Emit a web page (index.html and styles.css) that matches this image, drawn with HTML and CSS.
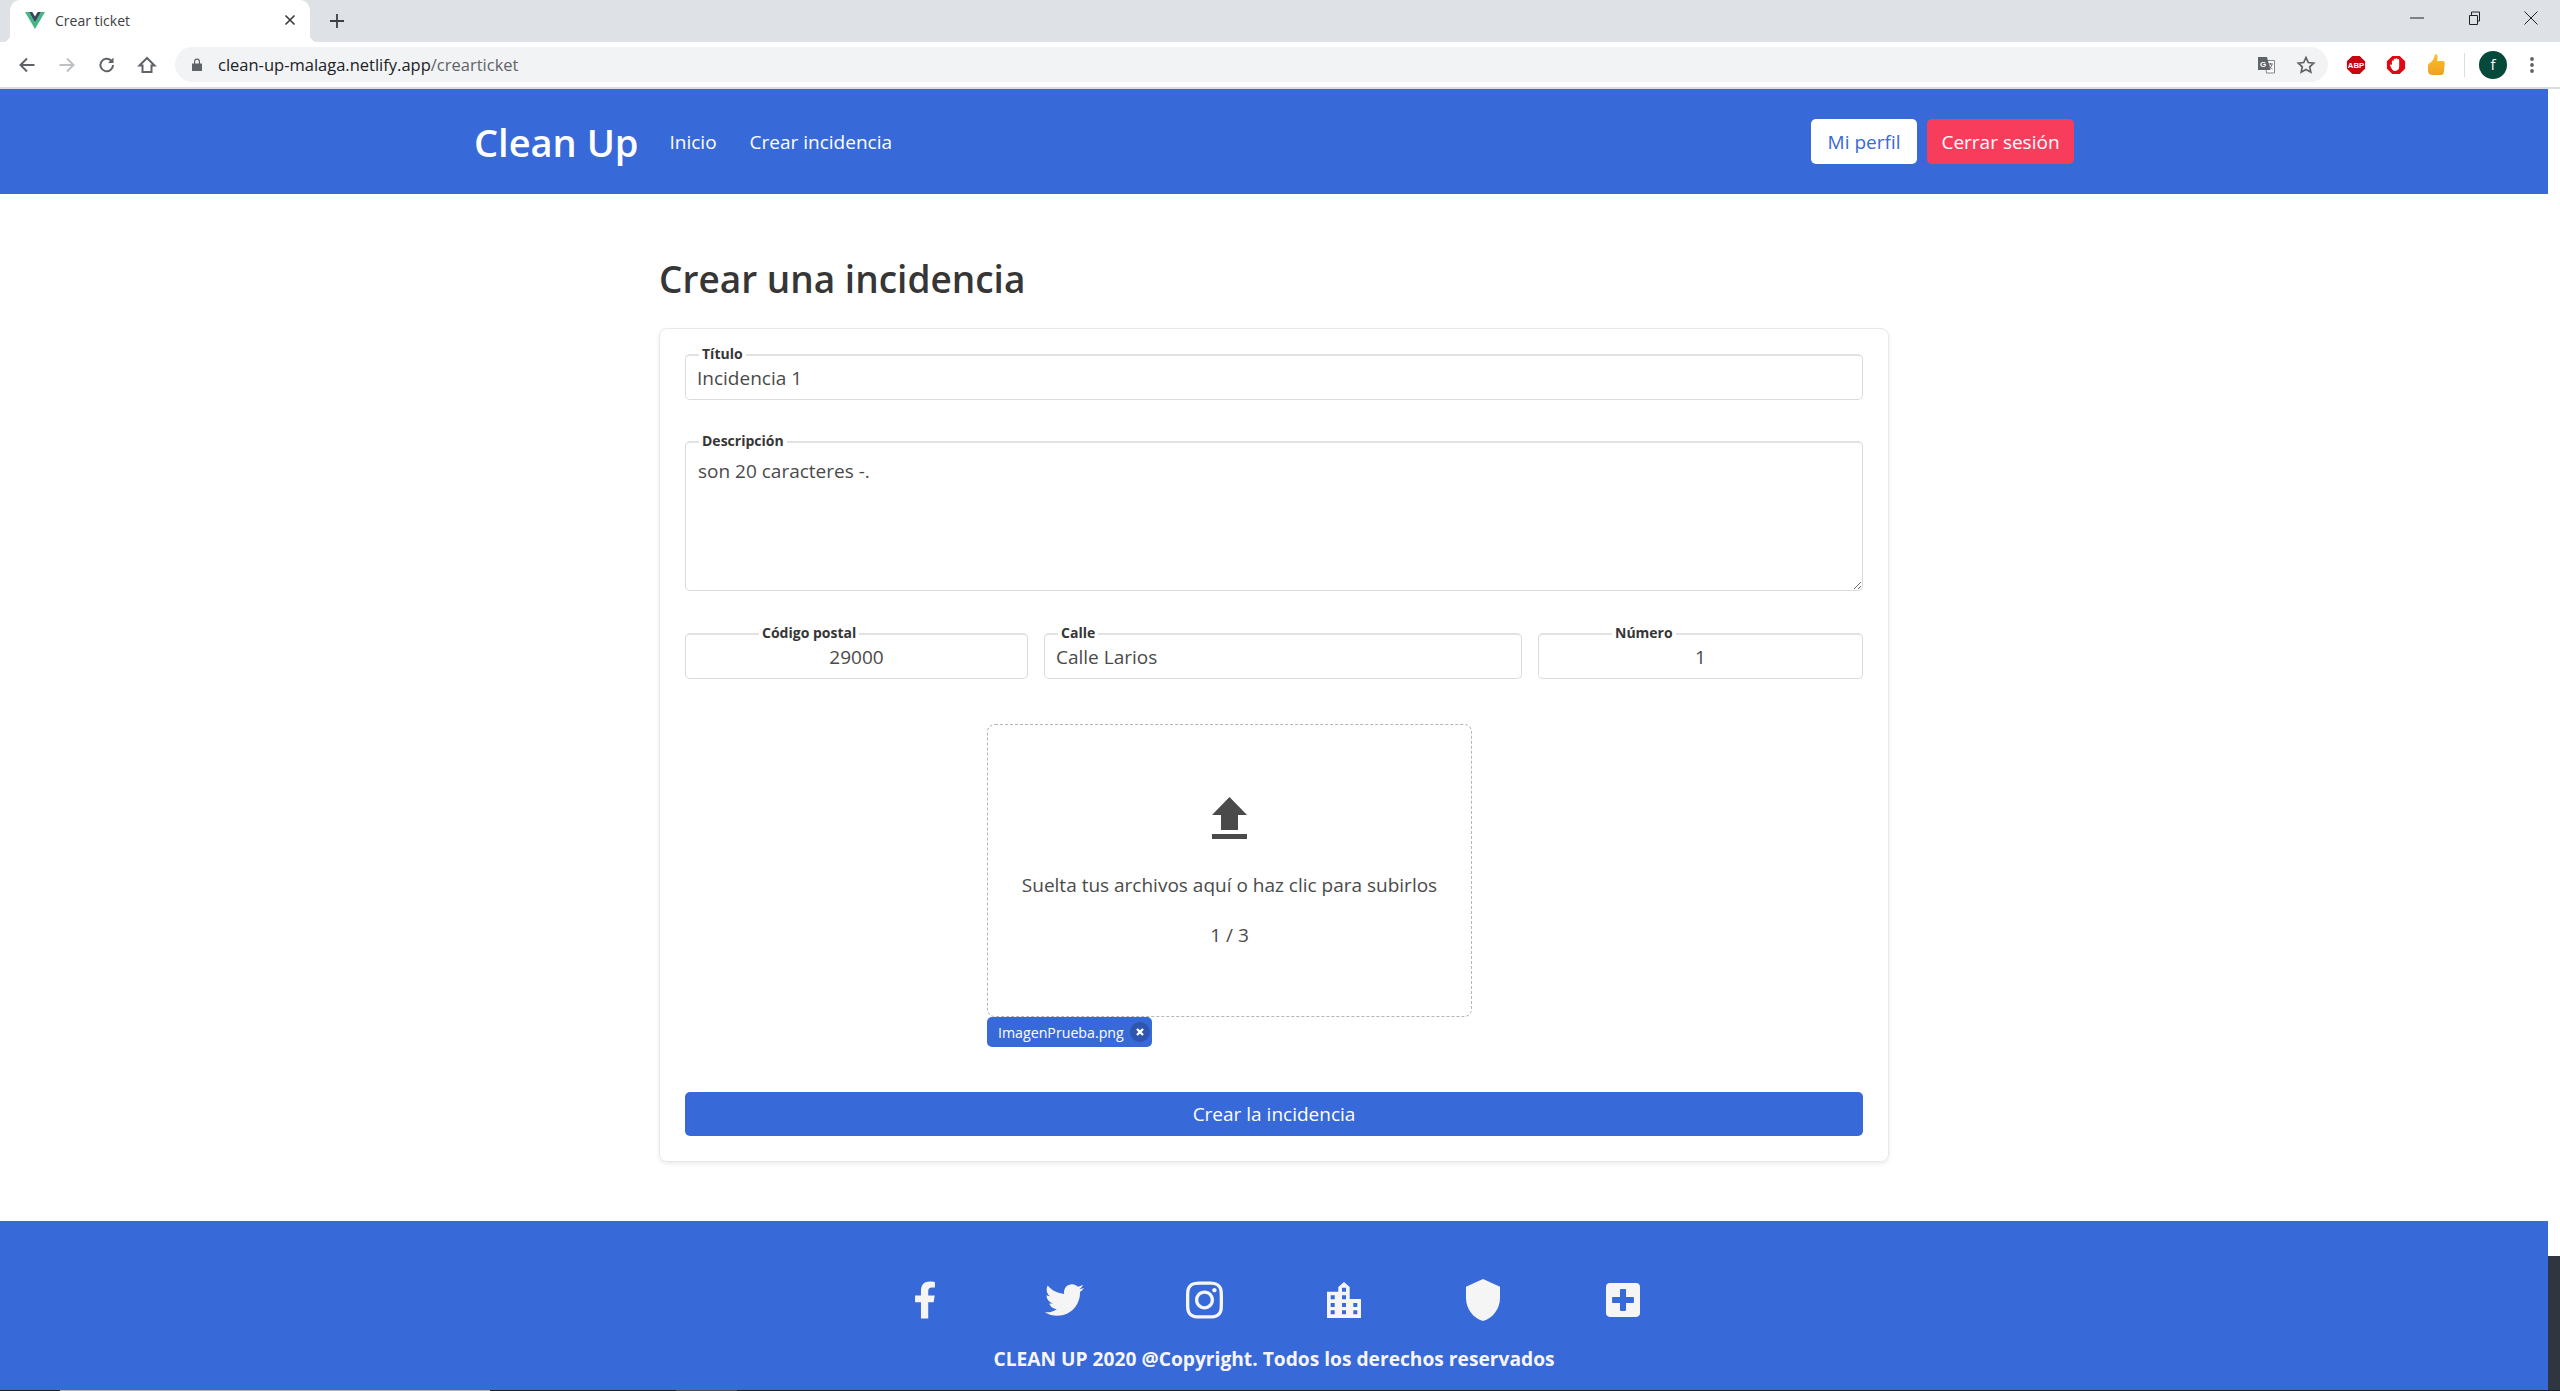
FILE: index.html
```html
<!DOCTYPE html>
<html lang="es">
<head>
<meta charset="utf-8">
<title>Crear ticket</title>
<link rel="stylesheet" href="styles.css">
</head>
<body>

<!-- browser chrome -->
<div class="tabstrip">
  <div class="tab">
    <svg class="favicon" viewBox="0 0 20 17"><path fill="#41b883" d="M0 0h4l6 10.500L16 0h4L10 17z"/><path fill="#35495e" d="M4 0h3.300L10 4.500 12.700 0H16l-6 10.500z"/></svg>
    <span class="tab-title">Crear ticket</span>
    <svg class="tab-close" viewBox="0 0 12 12"><path d="M1.500 1.500l9 9M10.500 1.500l-9 9" stroke="#3c4043" stroke-width="1.700" fill="none"/></svg>
  </div>
  <svg class="tab-new" viewBox="0 0 16 16"><path d="M8 1v14M1 8h14" stroke="#3c4043" stroke-width="1.800" fill="none"/></svg>
  <div class="win-controls">
    <svg viewBox="0 0 14 14"><path d="M0 7h14" stroke="#222" fill="none"/></svg>
    <svg viewBox="0 0 14 14"><path d="M2.500 4.500h8v9h-8zM4.500 4.500v-3.500h8v9h-2" stroke="#222" fill="none"/></svg>
    <svg viewBox="0 0 14 14"><path d="M0.500 0.500l13 13M13.500 0.500l-13 13" stroke="#222" fill="none"/></svg>
  </div>
</div>

<div class="toolbar">
  <div class="tool"><svg viewBox="0 0 20 20"><path d="M17.500 10H4M10 3.500L3.500 10l6.500 6.500" stroke="#5f6368" stroke-width="2" fill="none"/></svg></div>
  <div class="tool"><svg viewBox="0 0 20 20"><path d="M2.500 10H16M10 3.500l6.500 6.500-6.500 6.500" stroke="#bdc1c6" stroke-width="2" fill="none"/></svg></div>
  <div class="tool"><svg viewBox="0 0 20 20"><path d="M16 10a6.300 6.300 0 1 1-1.900-4.500" stroke="#5f6368" stroke-width="2" fill="none"/><path d="M16.500 2.500v5.500H11z" fill="#5f6368"/></svg></div>
  <div class="tool"><svg viewBox="0 0 20 20"><path d="M10 3L2.500 10.500h3V17h9v-6.500h3z" stroke="#5f6368" stroke-width="2" fill="none"/></svg></div>
  <div class="omnibox">
    <svg class="lock" viewBox="0 0 10 13"><path fill="#5f6368" d="M0 5.500h10V13H0zM2 5.500V3.500a3 3 0 0 1 6 0v2H6.800V3.500a1.800 1.800 0 0 0-3.600 0v2z"/></svg>
    <span class="url">clean-up-malaga.netlify.app<span class="url-path">/crearticket</span></span>
    <div class="tool omni-end"><svg viewBox="0 0 20 20"><path fill="#fff" stroke="#80868b" d="M9 5.500h9.500v12.500H10.500z"/><path fill="#5f6368" d="M2 2h9l3.500 13H2z"/><text x="4" y="11.500" class="tr-g">G</text><path d="M12 9h5M14.500 8v1.500M16 9.500c-.5 2-2 3.500-3.500 4.500M13 10.500c.5 1.500 2 3 3.500 3.500" stroke="#5f6368" fill="none"/></svg></div>
    <div class="tool"><svg viewBox="0 0 20 20"><path d="M10 2.500l2.300 5 5.400.6-4 3.700 1.100 5.400L10 14.500l-4.800 2.700 1.100-5.400-4-3.700 5.400-.6z" stroke="#5f6368" stroke-width="1.700" fill="none"/></svg></div>
  </div>
  <div class="tool ext-first"><svg viewBox="0 0 22 22"><path fill="#c8040e" d="M7 1h8l6 6v8l-6 6H7l-6-6V7z"/><text x="11" y="14.500" class="abp">ABP</text></svg></div>
  <div class="tool"><svg viewBox="0 0 22 22"><path fill="#e30613" d="M7 1h8l6 6v8l-6 6H7l-6-6V7z"/><path fill="#fff" d="M6.500 11V7a1 1 0 0 1 2 0V5a1 1 0 0 1 2 0V4.500a1 1 0 0 1 2 0V5.500a1 1 0 0 1 2 0V13a4.500 4.500 0 0 1-4.500 4.500c-2 0-3-1-4-3L4.500 11.500c-.500-1 1.300-1.800 2-.500z"/></svg></div>
  <div class="tool"><svg class="thumb-up" viewBox="0 0 17 21"><defs><linearGradient id="gold" x1="0" y1="0" x2="0" y2="1"><stop offset="0" stop-color="#fbc02d"/><stop offset="1" stop-color="#f0a020"/></linearGradient></defs><path fill="url(#gold)" d="M7 .500c1.500-.800 2.800.300 2.600 2L9.200 7H14.500c1.800 0 2.500 1.200 2.300 2.500l-1 9c-.2 1.500-1 2.500-2.800 2.500H5C2 21 0 19.500 0 17v-5c0-1.500 1-2.500 2.500-3.500C5 7 6.500 3 7 .500z"/></svg></div>
  <div class="tool-sep"></div>
  <div class="avatar">f</div>
  <div class="tool"><svg viewBox="0 0 20 20"><circle cx="10" cy="4" r="1.900" fill="#5f6368"/><circle cx="10" cy="10" r="1.900" fill="#5f6368"/><circle cx="10" cy="16" r="1.900" fill="#5f6368"/></svg></div>
</div>

<div class="viewport">
  <div class="page">

    <nav class="navbar">
      <a class="brand">Clean Up</a>
      <a class="nav-link">Inicio</a>
      <a class="nav-link">Crear incidencia</a>
      <div class="nav-end">
        <a class="btn btn-white">Mi perfil</a>
        <a class="btn btn-danger">Cerrar sesión</a>
      </div>
    </nav>

    <main class="content">
      <h1 class="title">Crear una incidencia</h1>
      <form class="card">
        <fieldset class="field">
          <legend>Título</legend>
          <input class="control" type="text" value="Incidencia 1">
        </fieldset>
        <fieldset class="field field-area">
          <legend>Descripción</legend>
          <textarea class="control">son 20 caracteres -.</textarea>
        </fieldset>
        <div class="address">
          <fieldset class="field">
            <legend class="legend-mid">Código postal</legend>
            <input class="control centered" type="text" value="29000">
          </fieldset>
          <fieldset class="field">
            <legend>Calle</legend>
            <input class="control" type="text" value="Calle Larios">
          </fieldset>
          <fieldset class="field">
            <legend class="legend-mid">Número</legend>
            <input class="control centered" type="text" value="1">
          </fieldset>
        </div>
        <div class="upload">
          <div class="dropzone">
            <svg class="upload-icon" viewBox="0 0 35 42"><path fill="#4a4a4a" d="M17.500 0L35 18H26V33H9V18H0zM0 37H35V42H0z"/></svg>
            <p class="drop-text">Suelta tus archivos aquí o haz clic para subirlos</p>
            <p class="drop-count">1 / 3</p>
          </div>
          <div class="chip">
            <span>ImagenPrueba.png</span>
            <span class="chip-del"><svg viewBox="0 0 10 10"><path d="M2 2l6 6M8 2l-6 6" stroke="#fff" stroke-width="2.400" fill="none"/></svg></span>
          </div>
        </div>
        <button class="submit" type="button">Crear la incidencia</button>
      </form>
    </main>

    <footer class="footer">
      <div class="socials">
        <a class="social"><svg class="ic-fb" viewBox="22 0 276 512"><path d="M279.14 288l14.22-92.66h-88.91v-60.13c0-25.35 12.42-50.06 52.24-50.06h40.42V6.26S260.43 0 225.36 0c-73.22 0-121.08 44.38-121.08 124.72v70.62H22.89V288h81.39v224h100.17V288z"/></svg></a>
        <a class="social"><svg class="ic-tw" viewBox="0 48 512 416"><path d="M459.37 151.716c.325 4.548.325 9.097.325 13.645 0 138.72-105.583 298.558-298.558 298.558-59.452 0-114.68-17.219-161.137-47.106 8.447.974 16.568 1.299 25.34 1.299 49.055 0 94.213-16.568 130.274-44.832-46.132-.975-84.792-31.188-98.112-72.772 6.498.974 12.995 1.624 19.818 1.624 9.421 0 18.843-1.3 27.614-3.573-48.081-9.747-84.143-51.98-84.143-102.985v-1.299c13.969 7.797 30.214 12.67 47.431 13.319-28.264-18.843-46.781-51.005-46.781-87.391 0-19.492 5.197-37.36 14.294-52.954 51.655 63.675 129.3 105.258 216.365 109.807-1.624-7.797-2.599-15.918-2.599-24.04 0-57.828 46.782-104.934 104.934-104.934 30.213 0 57.502 12.67 76.67 33.137 23.715-4.548 46.456-13.32 66.599-25.34-7.798 24.366-24.366 44.833-46.132 57.827 21.117-2.273 41.584-8.122 60.426-16.243-14.292 20.791-32.161 39.308-52.628 54.253z"/></svg></a>
        <a class="social"><svg class="ic-ig" viewBox="0 31 448 449"><path d="M224.1 141c-63.6 0-114.9 51.3-114.9 114.9s51.3 114.9 114.9 114.9S339 319.5 339 255.9 287.7 141 224.1 141zm0 189.6c-41.1 0-74.7-33.5-74.7-74.7s33.5-74.7 74.7-74.7 74.7 33.5 74.7 74.7-33.6 74.7-74.7 74.7zm146.4-194.3c0 14.9-12 26.8-26.8 26.8-14.9 0-26.8-12-26.8-26.8s12-26.8 26.8-26.8 26.8 12 26.8 26.8zm76.1 27.2c-1.7-35.9-9.9-67.7-36.2-93.9-26.2-26.2-58-34.4-93.9-36.2-37-2.1-147.9-2.1-184.9 0-35.8 1.7-67.6 9.9-93.9 36.1s-34.4 58-36.2 93.9c-2.1 37-2.1 147.9 0 184.9 1.7 35.9 9.9 67.7 36.2 93.9s58 34.4 93.9 36.2c37 2.1 147.9 2.1 184.9 0 35.9-1.7 67.7-9.9 93.9-36.2 26.2-26.2 34.4-58 36.2-93.9 2.1-37 2.1-147.8 0-184.8zM398.8 388c-7.8 19.6-22.9 34.7-42.6 42.6-29.5 11.7-99.5 9-132.1 9s-102.7 2.6-132.1-9c-19.6-7.8-34.7-22.9-42.6-42.6-11.700-29.5-9-99.5-9-132.1s-2.6-102.7 9-132.1c7.8-19.6 22.9-34.7 42.6-42.6 29.5-11.7 99.5-9 132.1-9s102.7-2.6 132.1 9c19.6 7.8 34.7 22.9 42.6 42.6 11.7 29.5 9 99.5 9 132.1s2.7 102.7-9 132.1z"/></svg></a>
        <a class="social"><svg class="ic-city" viewBox="0 0 34 36"><path fill-rule="evenodd" d="M0 9.700H11.300V5L17 0l5.700 5V17H34V36H0zM15 5.700v4h4v-4zM3.700 13.300v4h4v-4zM15 13.300v4h4v-4zM3.700 21v4h4v-4zM15 21v4h4v-4zM26.300 21v4h4v-4zM3.700 28.300v4h4v-4zM15 28.300v4h4v-4zM26.300 28.300v4h4v-4z"/></svg></a>
        <a class="social"><svg class="ic-shield" viewBox="3 1 18 22" preserveAspectRatio="none"><path d="M12,1L3,5V11C3,16.55 6.84,21.74 12,23C17.16,21.74 21,16.55 21,11V5L12,1Z"/></svg></a>
        <a class="social"><svg class="ic-plus" viewBox="0 32 448 448"><path d="M400 32H48C21.5 32 0 53.5 0 80v352c0 26.5 21.5 48 48 48h352c26.5 0 48-21.5 48-48V80c0-26.5-21.5-48-48-48zm-32 252c0 6.6-5.4 12-12 12h-92v92c0 6.6-5.4 12-12 12h-56c-6.6 0-12-5.4-12-12v-92H92c-6.6 0-12-5.4-12-12v-56c0-6.6 5.4-12 12-12h92v-92c0-6.6 5.4-12 12-12h56c6.6 0 12 5.4 12 12v92h92c6.6 0 12 5.4 12 12v56z"/></svg></a>
      </div>
      <p class="copyright">CLEAN UP 2020 @Copyright. Todos los derechos reservados</p>
    </footer>

  </div>
  <div class="scrollbar"><div class="thumb"></div></div>
</div>

<div class="taskbar-edge"><span class="edge-a"></span><span class="edge-b"></span></div>

</body>
</html>
```

FILE: styles.css
```css
html, body
  {
    margin : 0;
    height : 1391px;
    overflow : hidden;
  } /*html, body*/
body
  {
    font-family : "Open Sans", "Liberation Sans", sans-serif;
    font-size : 19px;
    color : #4a4a4a;
    background-color : #fff;
  } /*body*/
p
  {
    margin : 0;
  } /*p*/

/* browser chrome */
.tabstrip
  {
    display : flex;
    align-items : center;
    height : 42px;
    padding-left : 10px;
    background-color : #dee1e6;
  } /*.tabstrip*/
.tab
  {
    position : relative;
    display : flex;
    align-items : center;
    box-sizing : border-box;
    width : 300px;
    height : 42px;
    padding : 0 14px 2px 15px;
    background-color : #fff;
    border-radius : 10px 10px 0 0;
  } /*.tab*/
.tab:before, .tab:after
  {
    content : "";
    position : absolute;
    bottom : 0;
    width : 8px;
    height : 8px;
  } /*.tab:before, .tab:after*/
.tab:before
  {
    left : -8px;
    background : radial-gradient(circle at 0 0, #dee1e6 8px, #fff 8.500px);
  } /*.tab:before*/
.tab:after
  {
    right : -8px;
    background : radial-gradient(circle at 100% 0, #dee1e6 8px, #fff 8.500px);
  } /*.tab:after*/
.favicon
  {
    width : 20px;
    height : 17px;
  } /*.favicon*/
.tab-title
  {
    margin-left : 10px;
    font-size : 14px;
    color : #3c4043;
  } /*.tab-title*/
.tab-close
  {
    width : 12px;
    height : 12px;
    margin-left : auto;
  } /*.tab-close*/
.tab-new
  {
    width : 16px;
    height : 16px;
    margin-left : 19px;
  } /*.tab-new*/
.win-controls
  {
    display : flex;
    gap : 43px;
    margin-left : auto;
    padding : 0 22px 6px 0;
  } /*.win-controls*/
.win-controls svg
  {
    width : 14px;
    height : 14px;
  } /*.win-controls svg*/

.toolbar
  {
    display : flex;
    align-items : center;
    box-sizing : border-box;
    height : 47px;
    padding : 0 8px 0 7px;
    background-color : #fff;
    border-bottom : 2px solid #dadce0;
  } /*.toolbar*/
.tool
  {
    display : flex;
    align-items : center;
    justify-content : center;
    flex : none;
    width : 40px;
  } /*.tool*/
.tool svg
  {
    width : 20px;
    height : 20px;
  } /*.tool svg*/
.tool .thumb-up
  {
    width : 17px;
    height : 21px;
  } /*.tool .thumb-up*/
.omnibox
  {
    display : flex;
    align-items : center;
    flex : 1;
    height : 35px;
    margin-left : 8px;
    padding : 0 2px 0 17px;
    background-color : #f1f3f4;
    border-radius : 18px;
  } /*.omnibox*/
.lock
  {
    width : 10px;
    height : 13px;
  } /*.lock*/
.url
  {
    margin-left : 16px;
    font-size : 16.500px;
    color : #202124;
  } /*.url*/
.url-path
  {
    color : #5f6368;
  } /*.url-path*/
.omni-end
  {
    margin-left : auto;
  } /*.omni-end*/
.tr-g
  {
    font : bold 8px "Liberation Sans", sans-serif;
    fill : #fff;
  } /*.tr-g*/
.abp
  {
    font : bold 8.500px "Liberation Sans", sans-serif;
    fill : #fff;
    text-anchor : middle;
  } /*.abp*/
.ext-first
  {
    margin-left : 8px;
  } /*.ext-first*/
.tool-sep
  {
    width : 1px;
    height : 24px;
    margin-left : 8px;
    background-color : #dadce0;
  } /*.tool-sep*/
.avatar
  {
    width : 28px;
    height : 28px;
    margin : 0 5px 0 14px;
    font-size : 15px;
    line-height : 27px;
    text-align : center;
    color : #fff;
    background-color : #04493a;
    border-radius : 50%;
  } /*.avatar*/

/* page */
.viewport
  {
    display : flex;
    height : 1301px;
  } /*.viewport*/
.page
  {
    display : flex;
    flex-direction : column;
    flex : 1;
    min-width : 0;
  } /*.page*/
.scrollbar
  {
    display : flex;
    flex-direction : column;
    justify-content : flex-end;
    width : 12px;
  } /*.scrollbar*/
.thumb
  {
    height : 134px;
    background-color : #2f3640;
  } /*.thumb*/
.taskbar-edge
  {
    display : flex;
    height : 1px;
    padding-left : 60px;
    background-color : #1f2126;
  } /*.taskbar-edge*/
.edge-a
  {
    width : 430px;
    background-color : #b4b4b4;
  } /*.edge-a*/
.edge-b
  {
    width : 61px;
    margin-left : 186px;
    background-color : #4a4a4a;
  } /*.edge-b*/

.navbar
  {
    display : flex;
    align-items : center;
    flex : none;
    box-sizing : border-box;
    height : 105px;
    padding : 0 474px;
    background-color : #3869d8;
  } /*.navbar*/
.brand
  {
    margin-right : 31px;
    font-size : 38px;
    font-weight : 600;
    color : #fff;
  } /*.brand*/
.nav-link
  {
    margin-right : 33px;
    color : #fff;
  } /*.nav-link*/
.nav-end
  {
    display : flex;
    gap : 10px;
    margin-left : auto;
  } /*.nav-end*/
.btn
  {
    display : flex;
    align-items : center;
    justify-content : center;
    height : 45px;
    border-radius : 5px;
  } /*.btn*/
.btn-white
  {
    width : 106px;
    color : #3869d8;
    background-color : #fff;
  } /*.btn-white*/
.btn-danger
  {
    width : 147px;
    color : #fff;
    background-color : #f83d5c;
  } /*.btn-danger*/

.content
  {
    flex : 1;
    box-sizing : border-box;
    width : 1230px;
    margin : 0 auto;
    padding-top : 60px;
  } /*.content*/
.title
  {
    margin : 0 0 24px;
    font-size : 37px;
    font-weight : 600;
    line-height : 50px;
    color : #363636;
  } /*.title*/
.card
  {
    display : flex;
    flex-direction : column;
    box-sizing : border-box;
    height : 834px;
    padding : 19px 25px 25px;
    border : 1px solid #e8e8e8;
    border-radius : 8px;
    box-shadow : 0 2px 4px rgba(10, 10, 10, 0.08);
  } /*.card*/

/* form fields */
.field
  {
    min-width : 0;
    margin : 0;
    padding : 0;
    border : 1px solid #dbdbdb;
    border-top : 2px solid #e2e2e2;
    border-radius : 5px;
  } /*.field*/
.field legend
  {
    margin-left : 13px;
    padding : 0 3px 2px;
    font-size : 14px;
    font-weight : 700;
    line-height : 12px;
    color : #363636;
  } /*.field legend*/
.field .legend-mid
  {
    margin-left : 73px;
  } /*.field .legend-mid*/
.field-area
  {
    margin-top : 35px;
  } /*.field-area*/
.control
  {
    display : block;
    box-sizing : border-box;
    width : 100%;
    height : 37px;
    margin : 0;
    padding : 0 11px 6px;
    font : inherit;
    color : #4a4a4a;
    background : transparent;
    border : 0;
    outline : 0;
  } /*.control*/
textarea.control
  {
    height : 141px;
    padding : 9px 12px 0;
    line-height : 26px;
  } /*textarea.control*/
.centered
  {
    text-align : center;
  } /*.centered*/
.address
  {
    display : grid;
    grid-template-columns : 343px 478px 1fr;
    gap : 16px;
    margin-top : 36px;
  } /*.address*/

/* drop area */
.upload
  {
    display : flex;
    flex-direction : column;
    align-items : flex-start;
    margin : 45px 0 45px 302px;
  } /*.upload*/
.dropzone
  {
    display : flex;
    flex-direction : column;
    align-items : center;
    box-sizing : border-box;
    width : 485px;
    height : 293px;
    padding-top : 72px;
    border : 1px dashed #b5b5b5;
    border-radius : 8px;
  } /*.dropzone*/
.upload-icon
  {
    width : 35px;
    height : 42px;
  } /*.upload-icon*/
.drop-text
  {
    margin-top : 33px;
    line-height : 26px;
  } /*.drop-text*/
.drop-count
  {
    margin-top : 24px;
    line-height : 26px;
  } /*.drop-count*/
.chip
  {
    display : flex;
    align-items : center;
    box-sizing : border-box;
    height : 30px;
    padding : 0 2px 0 11px;
    font-size : 14.200px;
    color : #fff;
    background-color : #3869d8;
    border-radius : 5px;
  } /*.chip*/
.chip-del
  {
    display : flex;
    align-items : center;
    justify-content : center;
    width : 20px;
    height : 20px;
    margin-left : 6px;
    background-color : rgba(10, 10, 10, 0.2);
    border-radius : 50%;
  } /*.chip-del*/
.chip-del svg
  {
    width : 10px;
    height : 10px;
  } /*.chip-del svg*/
.submit
  {
    height : 45px;
    padding : 0;
    font : inherit;
    color : #fff;
    background-color : #3869d8;
    border : 0;
    border-radius : 5px;
  } /*.submit*/

/* footer */
.footer
  {
    flex : none;
    box-sizing : border-box;
    height : 169px;
    padding-top : 57px;
    background-color : #3869d8;
  } /*.footer*/
.socials
  {
    display : grid;
    grid-template-columns : repeat(6, 139.5px);
    justify-content : center;
    height : 44px;
  } /*.socials*/
.social
  {
    display : flex;
    align-items : center;
    justify-content : center;
  } /*.social*/
.social svg
  {
    fill : #f5f5f5;
  } /*.social svg*/
.ic-fb
  {
    width : 20px;
    height : 38px;
  } /*.ic-fb*/
.ic-tw
  {
    width : 39px;
    height : 32px;
  } /*.ic-tw*/
.ic-ig
  {
    width : 37px;
    height : 38px;
  } /*.ic-ig*/
.ic-city
  {
    width : 34px;
    height : 36px;
  } /*.ic-city*/
.ic-shield
  {
    width : 34px;
    height : 42px;
  } /*.ic-shield*/
.ic-plus
  {
    width : 34px;
    height : 34px;
  } /*.ic-plus*/
.copyright
  {
    margin-top : 24px;
    font-weight : 700;
    font-size : 19.200px;
    line-height : 26px;
    text-align : center;
    color : #f5f5f5;
  } /*.copyright*/
```
